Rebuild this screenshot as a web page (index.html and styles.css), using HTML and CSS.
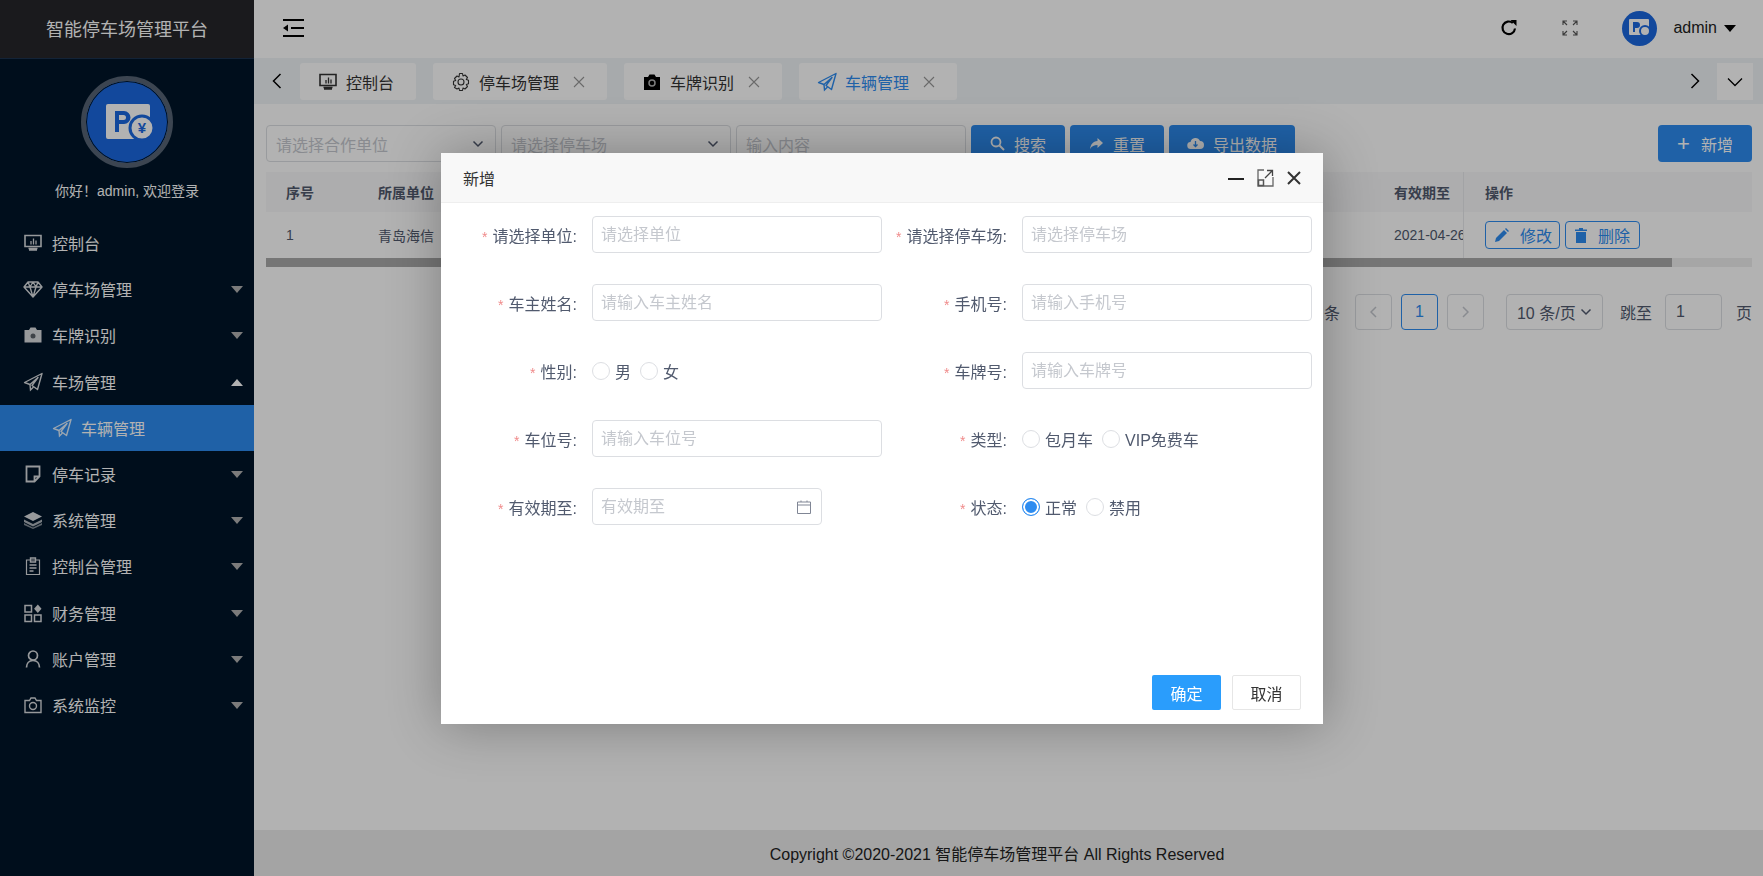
FILE: index.html
```html
<!DOCTYPE html>
<html lang="zh-CN">
<head>
    <meta charset="UTF-8">
    <title>智能停车场管理平台</title>
    <link rel="stylesheet" href="styles.css">
</head>
<body>

<svg class="sprite" width="0" height="0">
    <symbol id="i-screen" viewBox="0 0 20 20"><path d="M2 2.5h16v11H2zM6 17h8M5.500 15.500h9" fill="none" stroke="currentColor" stroke-width="1.600"/><path d="M8 11.500V8M10.500 11.500V5.500M13 11.500V7.500" fill="none" stroke="currentColor" stroke-width="1.300"/></symbol>
    <symbol id="i-send" viewBox="0 0 20 20"><path d="M19 1.500 1.500 10.500 7 12.500 15 5.500 9 13.500 14.500 17.500z" fill="none" stroke="currentColor" stroke-width="1.400" stroke-linejoin="round"/><path d="M7 12.500 7.500 18 10.500 15" fill="none" stroke="currentColor" stroke-width="1.400"/></symbol>
    <symbol id="i-x" viewBox="0 0 12 12"><path d="M1 1l10 10M11 1 1 11" fill="none" stroke="currentColor" stroke-width="1.100"/></symbol>
    <symbol id="i-down" viewBox="0 0 12 8"><path d="M1.500 1.500 6 6l4.500-4.500" fill="none" stroke="currentColor" stroke-width="1.500"/></symbol>
</svg>

<div class="layout">
    <!-- Левое меню -->
    <aside class="sidebar">
        <div class="brand">智能停车场管理平台</div>
        <div class="profile">
            <div class="logo">
                <svg width="82" height="82" viewBox="0 0 82 82">
                    <rect x="20" y="23" width="44" height="35" rx="2" fill="#fff"/>
                    <path d="M29 51V30h9a6.500 6.500 0 0 1 0 13h-5v8z M33 34v5h4.500a2.500 2.500 0 0 0 0-5z" fill="#1a68e0" fill-rule="evenodd"/>
                    <circle cx="56" cy="47" r="12" fill="#fff" stroke="#1a68e0" stroke-width="3"/>
                    <text x="56" y="52" class="logo-yen">¥</text>
                </svg>
            </div>
            <div class="greeting">你好！admin, 欢迎登录</div>
        </div>
        <nav class="menu">
            <a class="menu-item"><svg class="menu-icon"><use href="#i-screen"/></svg>控制台</a>
            <a class="menu-item has-sub">
                <svg class="menu-icon" viewBox="0 0 20 20"><path d="M5 3h10l4 5-9 10L1 8zM1 8h18M7 8l3 10 3-10M5 3l2 5 3-5 3 5 2-5" fill="none" stroke="currentColor" stroke-width="1.400" stroke-linejoin="round"/></svg>停车场管理</a>
            <a class="menu-item has-sub">
                <svg class="menu-icon" viewBox="0 0 20 20"><path d="M1.500 5h4.500l1.500-2.500h5L14 5h4.500v12.500h-17z" fill="currentColor"/><circle cx="10" cy="11" r="2.500" fill="#6b6f74"/></svg>车牌识别</a>
            <a class="menu-item has-sub open"><svg class="menu-icon"><use href="#i-send"/></svg>车场管理</a>
            <a class="menu-item sub active"><svg class="menu-icon"><use href="#i-send"/></svg>车辆管理</a>
            <a class="menu-item has-sub">
                <svg class="menu-icon" viewBox="0 0 20 20"><path d="M3.500 2.500h13v10l-5 5h-8zM11.500 17.500v-5h5" fill="none" stroke="currentColor" stroke-width="1.800"/></svg>停车记录</a>
            <a class="menu-item has-sub">
                <svg class="menu-icon" viewBox="0 0 20 20"><path d="M10 2 19 6.500 10 11 1 6.500z" fill="currentColor"/><path d="M1 9.500 10 14l9-4.500v2.500L10 16.500 1 12z" fill="currentColor" opacity=".8"/><path d="M1 13l9 4.500 9-4.500v2L10 19 1 15z" fill="currentColor" opacity=".6"/></svg>系统管理</a>
            <a class="menu-item has-sub">
                <svg class="menu-icon" viewBox="0 0 20 20"><path d="M3.500 4h13v14.500h-13z" fill="none" stroke="currentColor" stroke-width="1.200"/><path d="M7.500 2h5v4h-5zM6.500 9h7M6.500 12h7M6.500 15h4" fill="none" stroke="currentColor" stroke-width="1.400"/></svg>控制台管理</a>
            <a class="menu-item has-sub">
                <svg class="menu-icon" viewBox="0 0 20 20"><path d="M2 2.500h6.500V9H2zM2 12h6.500v6.500H2zM11.500 12H18v6.500h-6.500z" fill="none" stroke="currentColor" stroke-width="1.500"/><path d="M14.800 1.500 18.500 5.700 14.800 10l-3.700-4.300z" fill="currentColor"/></svg>财务管理</a>
            <a class="menu-item has-sub">
                <svg class="menu-icon" viewBox="0 0 20 20"><circle cx="10" cy="6.500" r="4.500" fill="none" stroke="currentColor" stroke-width="1.700"/><path d="M3.500 18.500c0-4 2.500-7 6.500-7s6.500 3 6.500 7" fill="none" stroke="currentColor" stroke-width="1.700"/></svg>账户管理</a>
            <a class="menu-item has-sub">
                <svg class="menu-icon" viewBox="0 0 20 20"><path d="M2 5.500h4.500L8 3h4l1.500 2.500H18v12H2z" fill="none" stroke="currentColor" stroke-width="1.400"/><circle cx="10" cy="11" r="3.500" fill="none" stroke="currentColor" stroke-width="1.400"/></svg>系统监控</a>
        </nav>
    </aside>

    <div class="main">
        <!-- Шапка -->
        <header class="topbar">
            <svg class="fold-icon" width="21" height="18" viewBox="0 0 21 18"><path d="M0 1h21M8 9h13M0 17h21" stroke="#000" stroke-width="2.200"/><path d="M0 9l5-3.500v7z"/></svg>
            <div class="top-right">
                <svg class="refresh" width="18" height="18" viewBox="0 0 18 18"><path d="M15 9.500A6.300 6.300 0 1 1 12.800 4" fill="none" stroke="#000" stroke-width="2.200"/><path d="M10.500 1 16.500 1V7z"/></svg>
                <svg class="expand" width="16" height="16" viewBox="0 0 16 16"><path d="M1 5V1h4M1 1l4 4M11 1h4v4M15 1l-4 4M1 11v4h4M1 15l4-4M15 11v4h-4M15 15l-4-4" fill="none" stroke="#555" stroke-width="1.100"/></svg>
                <div class="top-avatar">
                    <svg width="24" height="20" viewBox="0 0 24 20"><rect x="1" y="1" width="20" height="16" rx="1" fill="#fff"/><path d="M5 14V4h4a3 3 0 0 1 0 6H7v4z" fill="#1a68e0"/><circle cx="17" cy="13" r="5" fill="#fff" stroke="#1a68e0" stroke-width="2"/></svg>
                </div>
                <span class="username">admin</span>
                <span class="caret"></span>
            </div>
        </header>

        <!-- Вкладки -->
        <div class="tabs">
            <span class="tab-arrow"><svg width="10" height="16" viewBox="0 0 10 16"><path d="M8.500 1 1.500 8l7 7" fill="none" stroke="#000" stroke-width="1.500"/></svg></span>
            <a class="tab"><svg class="tab-icon"><use href="#i-screen"/></svg>控制台</a>
            <a class="tab">
                <svg class="tab-icon" viewBox="0 0 20 20"><circle cx="10" cy="10" r="3" fill="none" stroke="currentColor" stroke-width="1.100"/><path d="M8.500 1.500h3l.5 2.500 2-1 2.500 2.500-1.200 2 2.200.8v3.400l-2.200.8 1.200 2-2.500 2.500-2-1-.5 2.500h-3l-.5-2.500-2 1L3.500 15.500l1.200-2-2.200-.8V9.300l2.200-.8-1.200-2L6 4l2 1z" fill="none" stroke="currentColor" stroke-width="1.100" stroke-linejoin="round"/></svg>停车场管理<svg class="tab-close"><use href="#i-x"/></svg></a>
            <a class="tab">
                <svg class="tab-icon" viewBox="0 0 20 20"><path d="M2 5h4l1.500-2.500h5L14 5h4v13H2z" fill="#000"/><circle cx="10" cy="11" r="3" fill="none" stroke="#b3b3b3" stroke-width="1.500"/></svg>车牌识别<svg class="tab-close"><use href="#i-x"/></svg></a>
            <a class="tab active"><svg class="tab-icon"><use href="#i-send"/></svg>车辆管理<svg class="tab-close"><use href="#i-x"/></svg></a>
            <span class="tab-arrow next"><svg width="10" height="16" viewBox="0 0 10 16"><path d="M1.500 1l7 7-7 7" fill="none" stroke="#000" stroke-width="1.500"/></svg></span>
            <span class="tab-more"><svg width="16" height="10" viewBox="0 0 16 10"><path d="M1 1.500l7 7 7-7" fill="none" stroke="#000" stroke-width="1.300"/></svg></span>
        </div>

        <!-- Контент -->
        <main class="content">
            <div class="toolbar">
                <div class="field select">请选择合作单位<svg class="down"><use href="#i-down"/></svg></div>
                <div class="field select">请选择停车场<svg class="down"><use href="#i-down"/></svg></div>
                <div class="field">输入内容</div>
                <button class="btn"><svg width="15" height="15" viewBox="0 0 15 15"><circle cx="6" cy="6" r="4.500" fill="none" stroke="#fff" stroke-width="1.800"/><path d="M9.500 9.500 14 14" stroke="#fff" stroke-width="2"/></svg>搜索</button>
                <button class="btn"><svg width="15" height="15" viewBox="0 0 15 15"><path d="M8.500 2 14 7l-5.500 5V9C5 9 3 10 1 13c.5-4.500 3-7.500 7.500-8z" fill="#fff"/></svg>重置</button>
                <button class="btn wide"><svg width="17" height="15" viewBox="0 0 17 15"><path d="M4 13a3.500 3.500 0 0 1-.5-7A5 5 0 0 1 13 5a4 4 0 0 1 0 8z" fill="#fff"/><path d="M8.500 5v5M6.500 8.500l2 2 2-2" fill="none" stroke="#2d8cf0" stroke-width="1.300"/></svg>导出数据</button>
                <button class="btn add"><span class="plus">+</span>新增</button>
            </div>

            <div class="table">
                <div class="table-row table-head">
                    <div>序号</div>
                    <div>所属单位</div>
                    <div>有效期至</div>
                    <div class="fixed-col">操作</div>
                </div>
                <div class="table-row">
                    <div>1</div>
                    <div>青岛海信</div>
                    <div>2021-04-26</div>
                    <div class="fixed-col">
                        <button class="op-btn"><svg width="14" height="14" viewBox="0 0 14 14"><path d="M0 14l1-4 8-8 3 3-8 8zM10 1l1-1 3 3-1 1z" fill="#2d8cf0"/></svg>修改</button>
                        <button class="op-btn"><svg width="12" height="15" viewBox="0 0 12 15"><path d="M1 4h10v11H1zM0 1.500h4V0h4v1.500h4V3H0z" fill="#2d8cf0"/></svg>删除</button>
                    </div>
                </div>
            </div>
            <div class="scrollbar"><div class="scroll-thumb"></div></div>

            <div class="pager">
                <span class="total">共 1 条</span>
                <a class="page-box"><svg width="7" height="12" viewBox="0 0 7 12"><path d="M6 1 1 6l5 5" fill="none" stroke="#c5c8ce" stroke-width="1.500"/></svg></a>
                <a class="page-box current">1</a>
                <a class="page-box"><svg width="7" height="12" viewBox="0 0 7 12"><path d="M1 1l5 5-5 5" fill="none" stroke="#c5c8ce" stroke-width="1.500"/></svg></a>
                <div class="page-size">10 条/页<svg class="down"><use href="#i-down"/></svg></div>
                <span class="jump-text">跳至</span>
                <div class="page-input">1</div>
                <span class="jump-end">页</span>
            </div>
        </main>

        <footer class="footer">Copyright ©2020-2021 智能停车场管理平台 All Rights Reserved</footer>
    </div>
</div>

<div class="mask"></div>

<!-- Окно "新增" -->
<div class="modal">
    <div class="modal-head">
        <span>新增</span>
        <div class="modal-tools">
            <svg width="16" height="16" viewBox="0 0 16 16"><path d="M0 9h16" stroke="#222" stroke-width="2"/></svg>
            <svg width="17" height="18" viewBox="0 0 17 18"><path d="M7 1H1v16h15V8" fill="none" stroke="#666" stroke-width="1.300"/><path d="M1.500 11h5v5.500h-5z" fill="none" stroke="#555" stroke-width="1.500"/><path d="M8 9l7-7M10 1.500h5.500V7" fill="none" stroke="#444" stroke-width="1.300"/></svg>
            <svg width="14" height="14" viewBox="0 0 14 14"><path d="M1 1l12 12M13 1 1 13" stroke="#333" stroke-width="2"/></svg>
        </div>
    </div>
    <div class="modal-body">
        <div class="form-grid">
            <div class="form-item"><label>请选择单位:</label><input class="form-input" placeholder="请选择单位"></div>
            <div class="form-item"><label>请选择停车场:</label><input class="form-input" placeholder="请选择停车场"></div>
            <div class="form-item"><label>车主姓名:</label><input class="form-input" placeholder="请输入车主姓名"></div>
            <div class="form-item"><label>手机号:</label><input class="form-input" placeholder="请输入手机号"></div>
            <div class="form-item"><label>性别:</label>
                <div class="radios"><span class="radio"></span>男<span class="radio"></span>女</div>
            </div>
            <div class="form-item"><label>车牌号:</label><input class="form-input" placeholder="请输入车牌号"></div>
            <div class="form-item"><label>车位号:</label><input class="form-input" placeholder="请输入车位号"></div>
            <div class="form-item"><label>类型:</label>
                <div class="radios"><span class="radio"></span>包月车<span class="radio"></span>VIP免费车</div>
            </div>
            <div class="form-item"><label>有效期至:</label>
                <div class="date-wrap">
                    <input class="form-input" placeholder="有效期至">
                    <svg class="date-icon" width="14" height="14" viewBox="0 0 14 14"><path d="M.5 2h13v11.500H.5zM.5 5h13M4 .5V2M10 .5V2" fill="none" stroke="#808695"/></svg>
                </div>
            </div>
            <div class="form-item"><label>状态:</label>
                <div class="radios"><span class="radio checked"></span>正常<span class="radio"></span>禁用</div>
            </div>
        </div>
    </div>
    <div class="modal-foot">
        <button class="modal-ok">确定</button>
        <button class="modal-cancel">取消</button>
    </div>
</div>

</body>
</html>
```

FILE: styles.css
```css
* {
    box-sizing: border-box;
}
body {
    margin: 0;
    height: 876px;
    overflow: hidden;
    font-family: "Liberation Sans", "Noto Sans CJK SC", sans-serif;
    font-size: 16px;
    color: #515a6e;
    background: #fff;
}
.sprite {
    display: block;
    height: 0;
}
.layout {
    display: flex;
    height: 100%;
}

/* sidebar */
.sidebar {
    width: 254px;
    flex: none;
    background: #001529;
}
.brand {
    height: 59px;
    padding-bottom: 3px;
    display: flex;
    align-items: center;
    justify-content: center;
    font-size: 18px;
    color: #fff;
    background: #26262a;
    border-bottom: 1px solid #1c3350;
}
.profile {
    height: 161px;
    padding-top: 17px;
    text-align: center;
}
.logo {
    width: 92px;
    height: 92px;
    margin: 0 auto;
    border: 5px solid #566474;
    border-radius: 50%;
    background: #1a68e0;
    box-shadow: inset 0 0 0 1px #001529;
}
.logo svg {
    display: block;
}
.logo-yen {
    font-size: 15px;
    font-weight: bold;
    fill: #1a68e0;
    text-anchor: middle;
}
.greeting {
    margin-top: 13px;
    font-size: 14px;
    line-height: 20px;
    color: #fff;
}
.menu-item {
    height: 46.2px;
    padding-left: 23px;
    display: flex;
    align-items: center;
    position: relative;
    color: #fff;
    cursor: pointer;
}
.menu-icon {
    width: 20px;
    height: 20px;
    margin-right: 9px;
    flex: none;
    color: #fff;
    opacity: .85;
}
.menu-item.sub {
    padding-left: 52px;
    background: #2d8cf0;
}
.has-sub::after {
    content: "";
    position: absolute;
    right: 11px;
    top: 20px;
    border-left: 6.5px solid transparent;
    border-right: 6.5px solid transparent;
    border-top: 7px solid #b0b0b0;
}
.has-sub.open::after {
    border-top: none;
    border-bottom: 7px solid #fff;
}

/* top bar */
.main {
    flex: 1;
    min-width: 0;
    display: flex;
    flex-direction: column;
}
.topbar {
    height: 58px;
    flex: none;
    padding: 0 27px 2px 29px;
    display: flex;
    align-items: center;
    justify-content: space-between;
}
.top-right {
    display: flex;
    align-items: center;
}
.expand {
    margin-left: 44px;
}
.top-avatar {
    width: 35px;
    height: 35px;
    margin-left: 44px;
    border-radius: 50%;
    background: #1a68e0;
    display: flex;
    align-items: center;
    justify-content: center;
}
.username {
    margin-left: 16px;
    color: #222;
}
.caret {
    margin-left: 7px;
    border-left: 6.5px solid transparent;
    border-right: 6.5px solid transparent;
    border-top: 7px solid #000;
}

/* tabs */
.tabs {
    height: 46px;
    flex: none;
    padding: 5px 10px 4px 0;
    display: flex;
    gap: 17px;
    background: #f0f4f7;
}
.tab-arrow {
    width: 46px;
    margin-right: -17px;
    padding-bottom: 2px;
    display: flex;
    align-items: center;
    justify-content: center;
}
.tab-arrow.next {
    width: 20px;
    margin: 0 -5px 0 auto;
}
.tab-more {
    width: 36px;
    display: flex;
    align-items: center;
    justify-content: center;
    background: #fff;
}
.tab {
    padding: 0 22px 0 18px;
    display: flex;
    align-items: center;
    background: #fff;
    border-radius: 3px;
    color: #333;
    cursor: pointer;
}
.tab-icon {
    width: 20px;
    height: 20px;
    margin-right: 8px;
    flex: none;
}
.tab-close {
    width: 12px;
    height: 12px;
    margin-left: 14px;
    color: #999;
}
.tab.active {
    color: #2d8cf0;
}

/* toolbar */
.content {
    flex: 1;
    padding: 21px 11px 0 12px;
}
.toolbar {
    display: flex;
    gap: 5px;
    height: 37px;
}
.field {
    width: 230px;
    padding-left: 9px;
    display: flex;
    align-items: center;
    color: #c5c8ce;
    background: #fff;
    border: 1px solid #dcdee2;
    border-radius: 4px;
}
.down {
    width: 12px;
    height: 8px;
    margin-left: auto;
    margin-right: 11px;
    color: #515a6e;
}
.btn {
    width: 94px;
    display: flex;
    align-items: center;
    justify-content: center;
    gap: 9px;
    font: inherit;
    color: #fff;
    background: #2d8cf0;
    border: none;
    border-radius: 4px;
}
.btn.wide {
    width: 126px;
}
.btn.add {
    margin-left: auto;
    gap: 11px;
}
.plus {
    font-size: 22px;
    line-height: 1;
}

/* table */
.table {
    margin-top: 10px;
    font-size: 14px;
}
.table-row {
    height: 46px;
    display: grid;
    grid-template-columns: 92px 1016px 89px 1fr;
    align-items: center;
    color: #515a6e;
}
.table-row > div {
    padding-left: 20px;
    white-space: nowrap;
    overflow: hidden;
}
.table-head {
    height: 40px;
    font-weight: bold;
    background: #f8f8f9;
}
.table-row .fixed-col {
    height: 100%;
    padding-left: 21px;
    display: flex;
    align-items: center;
    gap: 5px;
    border-left: 1px solid #e8eaec;
}
.op-btn {
    width: 75px;
    height: 28px;
    padding: 0 0 0 9px;
    display: flex;
    align-items: center;
    gap: 11px;
    font: inherit;
    font-size: 16px;
    color: #2d8cf0;
    background: #fff;
    border: 1px solid #2d8cf0;
    border-radius: 4px;
}
.scrollbar {
    height: 9px;
    background: #eee;
}
.scroll-thumb {
    width: 1406px;
    height: 100%;
    background: #aaa;
}

/* pager */
.pager {
    margin-top: 27px;
    height: 36px;
    display: flex;
    align-items: center;
}
.total {
    margin-left: auto;
    margin-right: 15px;
}
.page-box {
    width: 37px;
    height: 36px;
    margin-right: 9px;
    display: flex;
    align-items: center;
    justify-content: center;
    background: #fff;
    border: 1px solid #dcdee2;
    border-radius: 4px;
}
.page-box.current {
    color: #2d8cf0;
    border-color: #2d8cf0;
}
.page-size {
    width: 97px;
    height: 36px;
    margin-left: 13px;
    padding-left: 10px;
    display: flex;
    align-items: center;
    border: 1px solid #dcdee2;
    border-radius: 4px;
    white-space: nowrap;
}
.page-size .down {
    margin-left: 4px;
    margin-right: 0;
}
.jump-text {
    margin-left: 17px;
}
.page-input {
    width: 57px;
    height: 36px;
    margin-left: 13px;
    padding-left: 10px;
    display: flex;
    align-items: center;
    border: 1px solid #dcdee2;
    border-radius: 4px;
}
.jump-end {
    margin-left: 14px;
}

.footer {
    height: 46px;
    flex: none;
    padding-right: 23px;
    display: flex;
    align-items: center;
    justify-content: center;
    color: #222;
    background: #ebebeb;
}

/* mask + modal */
.mask {
    position: fixed;
    inset: 0;
    background: rgba(0, 0, 0, .3);
}
.modal {
    position: absolute;
    left: 441px;
    top: 153px;
    width: 882px;
    height: 571px;
    display: flex;
    flex-direction: column;
    background: #fff;
    box-shadow: 1px 1px 50px rgba(0, 0, 0, .3);
}
.modal-head {
    height: 50px;
    flex: none;
    padding: 0 22px;
    display: flex;
    align-items: center;
    justify-content: space-between;
    color: #333;
    background: #f8f8f8;
    border-bottom: 1px solid #eee;
}
.modal-tools {
    display: flex;
    align-items: center;
    gap: 13px;
}
.modal-body {
    flex: 1;
    padding: 13px 0 0 11px;
}
.form-grid {
    display: grid;
    grid-template-columns: 430px 430px;
    grid-auto-rows: 37px;
    row-gap: 31px;
}
.form-item {
    display: flex;
    align-items: center;
    gap: 15px;
}
.form-item label {
    width: 125px;
    flex: none;
    text-align: right;
    white-space: nowrap;
}
.form-item label::before {
    content: "*";
    margin-right: 5px;
    font-size: 14px;
    color: #f08a8a;
}
.form-input {
    width: 290px;
    height: 37px;
    padding: 0 8px;
    font: inherit;
    color: #515a6e;
    background: #fff;
    border: 1px solid #dcdee2;
    border-radius: 4px;
    outline: none;
}
.form-input::placeholder {
    color: #c5c8ce;
}
.date-wrap {
    position: relative;
    width: 230px;
}
.date-wrap .form-input {
    display: block;
    width: 100%;
}
.date-icon {
    position: absolute;
    right: 11px;
    top: 12px;
}
.radios {
    display: flex;
    align-items: center;
}
.radio {
    width: 18px;
    height: 18px;
    margin-right: 5px;
    background: #fff;
    border: 1px solid #dcdee2;
    border-radius: 50%;
}
.radio:not(:first-child) {
    margin-left: 9px;
}
.radio.checked {
    border-color: #2d8cf0;
    box-shadow: inset 0 0 0 2px #fff;
    background: #2d8cf0;
}
.modal-foot {
    padding: 0 22px 14px 0;
    display: flex;
    justify-content: flex-end;
    gap: 11px;
}
.modal-ok,
.modal-cancel {
    width: 69px;
    height: 35px;
    font: inherit;
    border-radius: 2px;
}
.modal-ok {
    color: #fff;
    background: #2a9dfc;
    border: none;
}
.modal-cancel {
    color: #333;
    background: #fff;
    border: 1px solid #e6e6e6;
}
```
